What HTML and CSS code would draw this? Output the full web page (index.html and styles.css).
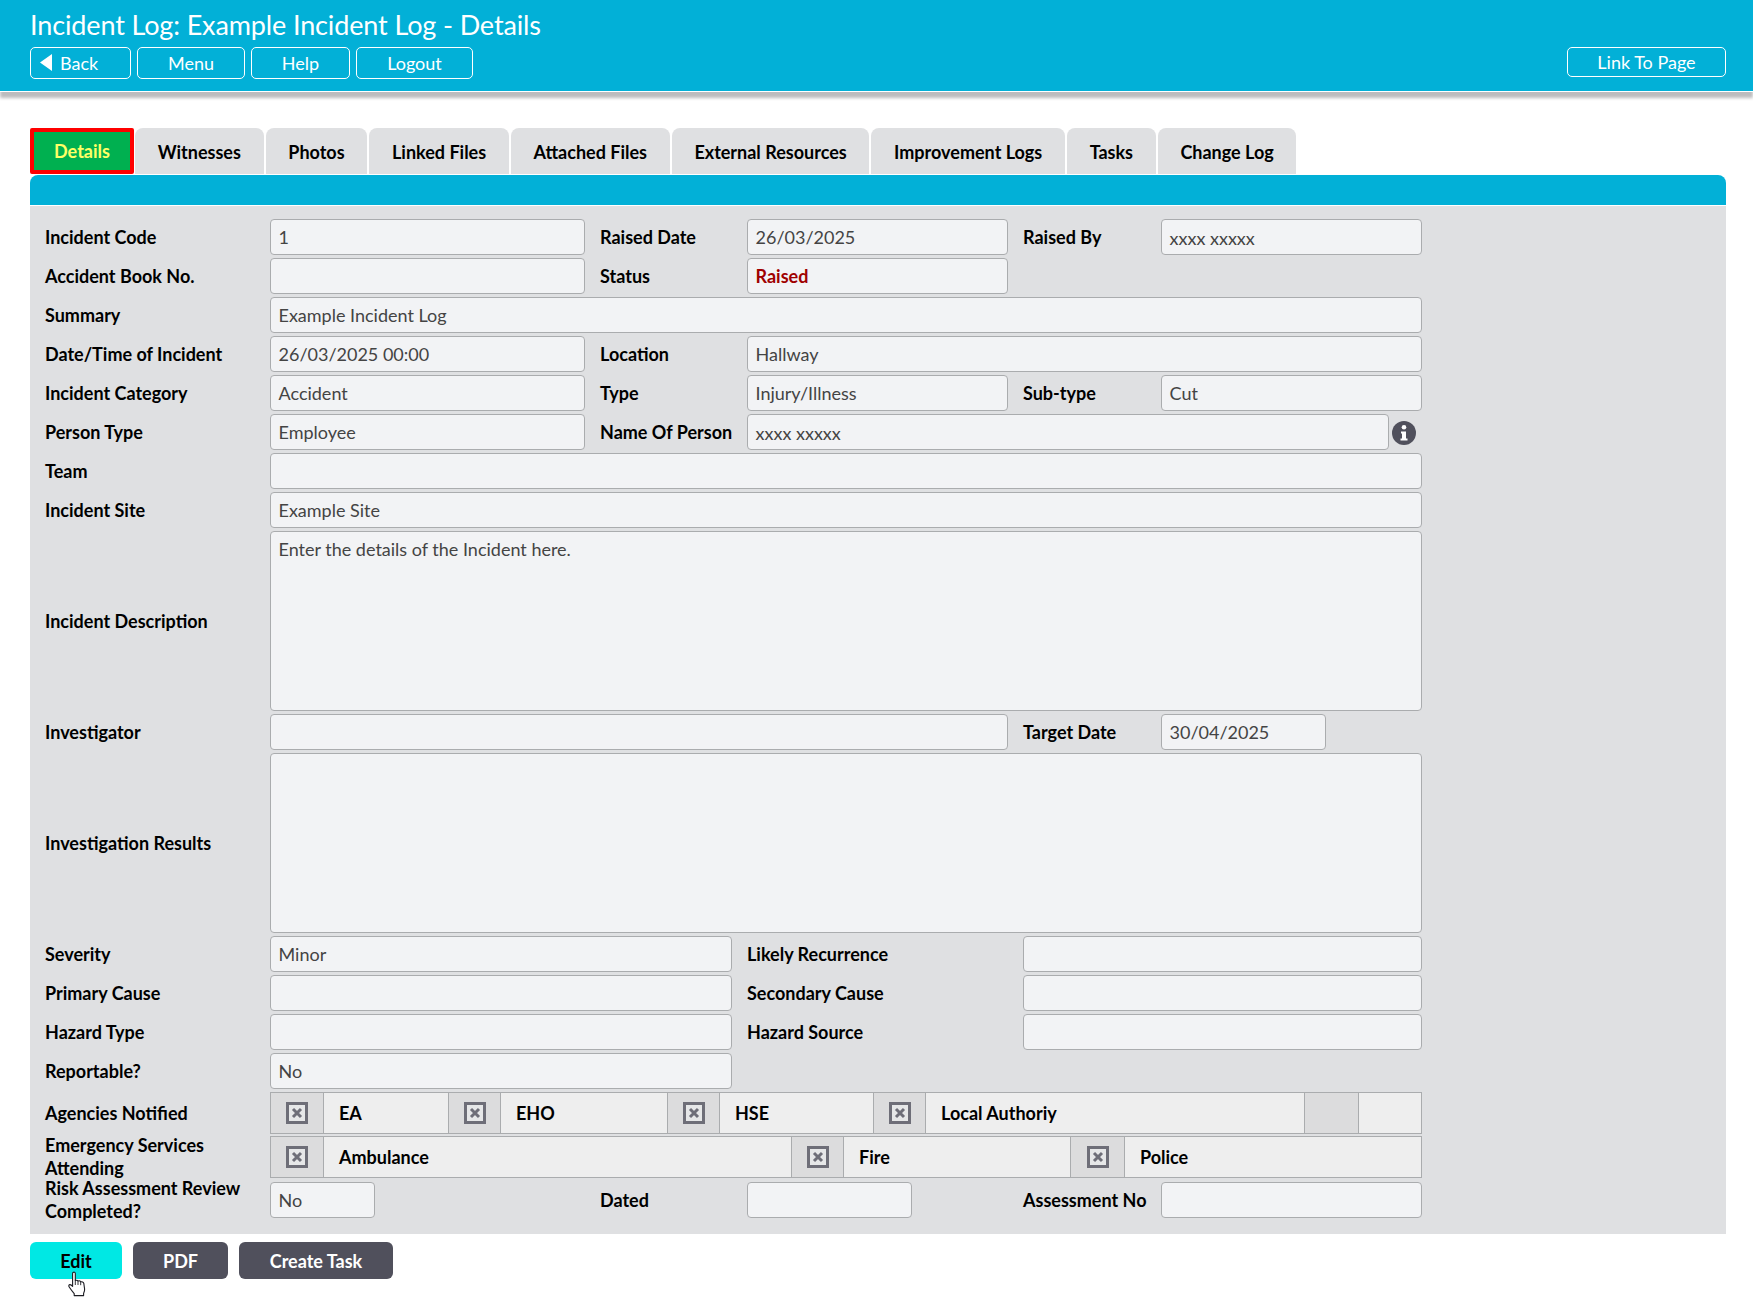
FILE: index.html
```html
<!DOCTYPE html>
<html lang="en">
<head>
  <meta charset="UTF-8">
  <title>Incident Log: Example Incident Log - Details</title>
  <link rel="stylesheet" href="styles.css">
</head>
<body>
  <!-- Page header -->
  <header class="page-header">
    <h1>Incident Log: Example Incident Log - Details</h1>
    <div class="header-nav">
      <a class="nav-btn btn-back">
        <svg class="back-arrow" width="12" height="17" viewBox="0 0 12 17"><path d="M12 0V17L0 8.5Z" fill="#fff"/></svg>
        Back
      </a>
      <a class="nav-btn btn-menu">Menu</a>
      <a class="nav-btn btn-help">Help</a>
      <a class="nav-btn btn-logout">Logout</a>
      <a class="nav-btn btn-link">Link To Page</a>
    </div>
  </header>

  <main class="content">
    <!-- Tabs -->
    <nav class="tabs">
      <a class="tab tab-active">Details</a>
      <a class="tab">Witnesses</a>
      <a class="tab">Photos</a>
      <a class="tab">Linked Files</a>
      <a class="tab">Attached Files</a>
      <a class="tab">External Resources</a>
      <a class="tab">Improvement Logs</a>
      <a class="tab">Tasks</a>
      <a class="tab">Change Log</a>
    </nav>
    <div class="blue-bar"></div>

    <!-- Form -->
    <section class="panel">
      <div class="row">
        <label class="lab-a">Incident Code</label>
        <div class="field f-315">1</div>
        <label class="lab-b">Raised Date</label>
        <div class="field f-261">26/03/2025</div>
        <label class="lab-c">Raised By</label>
        <div class="field f-261 masked">xxxx xxxxx</div>
      </div>
      <div class="row">
        <label class="lab-a">Accident Book No.</label>
        <div class="field f-315"></div>
        <label class="lab-b">Status</label>
        <div class="field f-261 status">Raised</div>
      </div>
      <div class="row">
        <label class="lab-a">Summary</label>
        <div class="field f-full">Example Incident Log</div>
      </div>
      <div class="row">
        <label class="lab-a">Date/Time of Incident</label>
        <div class="field f-315">26/03/2025 00:00</div>
        <label class="lab-b">Location</label>
        <div class="field f-675">Hallway</div>
      </div>
      <div class="row">
        <label class="lab-a">Incident Category</label>
        <div class="field f-315">Accident</div>
        <label class="lab-b">Type</label>
        <div class="field f-261">Injury/Illness</div>
        <label class="lab-c">Sub-type</label>
        <div class="field f-261">Cut</div>
      </div>
      <div class="row">
        <label class="lab-a">Person Type</label>
        <div class="field f-315">Employee</div>
        <label class="lab-b">Name Of Person</label>
        <div class="field f-642 masked">xxxx xxxxx</div>
        <svg class="info-icon" width="24" height="24" viewBox="0 0 24 24">
          <circle cx="12" cy="12" r="12" fill="#50505c"/>
          <circle cx="12" cy="6.2" r="2.3" fill="#fff"/>
          <path d="M9 10.5H14V17.5H15.5V19.5H8.5V17.5H10V12.5H9Z" fill="#fff"/>
        </svg>
      </div>
      <div class="row">
        <label class="lab-a">Team</label>
        <div class="field f-full"></div>
      </div>
      <div class="row">
        <label class="lab-a">Incident Site</label>
        <div class="field f-full">Example Site</div>
      </div>
      <div class="row">
        <label class="lab-a">Incident Description</label>
        <div class="field f-full area">Enter the details of the Incident here.</div>
      </div>
      <div class="row">
        <label class="lab-a">Investigator</label>
        <div class="field f-738"></div>
        <label class="lab-c">Target Date</label>
        <div class="field f-165">30/04/2025</div>
      </div>
      <div class="row">
        <label class="lab-a">Investigation Results</label>
        <div class="field f-full area"></div>
      </div>
      <div class="row">
        <label class="lab-a">Severity</label>
        <div class="field f-462">Minor</div>
        <label class="lab-d">Likely Recurrence</label>
        <div class="field f-399"></div>
      </div>
      <div class="row">
        <label class="lab-a">Primary Cause</label>
        <div class="field f-462"></div>
        <label class="lab-d">Secondary Cause</label>
        <div class="field f-399"></div>
      </div>
      <div class="row">
        <label class="lab-a">Hazard Type</label>
        <div class="field f-462"></div>
        <label class="lab-d">Hazard Source</label>
        <div class="field f-399"></div>
      </div>
      <div class="row">
        <label class="lab-a">Reportable?</label>
        <div class="field f-462">No</div>
      </div>
      <div class="row">
        <label class="lab-a">Agencies Notified</label>
        <div class="check-group">
          <span class="check-box check-first"><svg width="22" height="22" viewBox="0 0 22 22"><use href="#cross-box"/></svg></span>
          <span class="check-text w-126">EA</span>
          <span class="check-box"><svg width="22" height="22" viewBox="0 0 22 22"><use href="#cross-box"/></svg></span>
          <span class="check-text w-168">EHO</span>
          <span class="check-box"><svg width="22" height="22" viewBox="0 0 22 22"><use href="#cross-box"/></svg></span>
          <span class="check-text w-155">HSE</span>
          <span class="check-box"><svg width="22" height="22" viewBox="0 0 22 22"><use href="#cross-box"/></svg></span>
          <span class="check-text w-380">Local Authoriy</span>
          <span class="check-box check-wide"></span>
          <span class="check-text grow"></span>
        </div>
      </div>
      <div class="row row-second">
        <label class="lab-a lab-two">Emergency Services Attending</label>
        <div class="check-group">
          <span class="check-box check-first"><svg width="22" height="22" viewBox="0 0 22 22"><use href="#cross-box"/></svg></span>
          <span class="check-text w-469">Ambulance</span>
          <span class="check-box"><svg width="22" height="22" viewBox="0 0 22 22"><use href="#cross-box"/></svg></span>
          <span class="check-text w-228">Fire</span>
          <span class="check-box check-wide"><svg width="22" height="22" viewBox="0 0 22 22"><use href="#cross-box"/></svg></span>
          <span class="check-text grow">Police</span>
        </div>
      </div>
      <div class="row row-last">
        <label class="lab-a lab-two">Risk Assessment Review Completed?</label>
        <div class="field f-105">No</div>
        <label class="lab-e">Dated</label>
        <div class="field f-165"></div>
        <label class="lab-f">Assessment No</label>
        <div class="field f-261"></div>
      </div>
    </section>

    <!-- Actions -->
    <div class="actions">
      <a class="action-btn btn-edit">
        Edit
        <svg class="hand-cursor" width="20" height="26" viewBox="0 0 20 26">
          <path d="M6 1.5C7 .8 8.3 1.2 8.3 2.6V9.5C9.5 9 10.5 9.2 11 10C12.2 9.6 13.2 9.9 13.7 10.8C15 10.5 16.5 11 16.8 12.4L17.6 18C17.8 20 17.2 21 16.6 22.2V24.6H7.2V22.6C5.8 21 4.2 19 2.2 16C1.4 14.8 1.8 13.6 3 13.6C4 13.6 5 14.6 5.6 15.4V2.8C5.6 2.3 5.7 1.8 6 1.5Z" fill="#fff" stroke="#1c1c22" stroke-width="1.1" stroke-linejoin="round"/>
          <path d="M8.3 9.5V14M11 10V14M13.7 10.8V14.2" stroke="#1c1c22" stroke-width=".9" fill="none"/>
        </svg>
      </a>
      <a class="action-btn btn-pdf">PDF</a>
      <a class="action-btn btn-task">Create Task</a>
    </div>
  </main>

  <!-- Shared checkbox glyph -->
  <svg class="sprite" width="0" height="0">
    <symbol id="cross-box" viewBox="0 0 22 22">
      <rect x="1.5" y="1.5" width="19" height="19" fill="#e6e7e8" stroke="#6e6e78" stroke-width="3"/>
      <path d="M7 7L15 15M15 7L7 15" stroke="#6e6e78" stroke-width="3"/>
    </symbol>
  </svg>
</body>
</html>
```

FILE: styles.css
```css
* {
  margin: 0;
  padding: 0;
  box-sizing: border-box;
}

body {
  background-color: #fff;
  font-family: "Lato", "Liberation Sans", sans-serif;
  font-size: 18px;
  color: #000;
  overflow: hidden;
  height: 1314px;
}

.sprite {
  display: block;
}

/* header */
.page-header {
  height: 92px;
  background-color: #02b0d7;
  border-bottom: 1px solid #fff;
  box-shadow: 0 6px 3px 0 #bcbcbe;
  padding: 7px 27px 0 30px;
}

.page-header h1 {
  font-size: 27px;
  font-weight: 400;
  line-height: 35px;
  letter-spacing: -0.13px;
  color: #fff;
}

.header-nav {
  display: flex;
  gap: 6px;
  margin-top: 5px;
}

.nav-btn {
  display: flex;
  align-items: center;
  justify-content: center;
  height: 32px;
  padding-bottom: 1px;
  border: 1px solid #fff;
  border-radius: 5px;
  color: #fff;
  font-size: 18px;
}

.btn-back { width: 101px; gap: 8px; justify-content: flex-start; padding-left: 9px; }
.btn-menu { width: 108px; }
.btn-help { width: 99px; }
.btn-logout { width: 117px; }
.btn-link { width: 159px; margin-left: auto; height: 30px; }

/* tabs */
.content {
  padding: 36px 27px 0 30px;
}

.tabs {
  display: flex;
  gap: 2px;
  height: 46px;
}

.tab {
  display: flex;
  align-items: center;
  padding: 1px 22.7px 0;
  background-color: #dfe0e2;
  border-radius: 8px 8px 0 0;
  font-weight: 700;
  font-size: 18px;
  color: #000;
}

.tab-active {
  width: 104px;
  margin-right: -1px;
  justify-content: center;
  padding: 0;
  background-color: #00b050;
  border: 4px solid #f00;
  border-radius: 2px;
  color: #ffff66;
}

.blue-bar {
  height: 31px;
  margin-top: 1px;
  background-color: #02b0d7;
  border-radius: 8px 8px 0 0;
  border-bottom: 1px solid #fff;
}

/* form */
.panel {
  display: flex;
  flex-direction: column;
  gap: 3px;
  height: 1028px;
  padding: 13px 15px 0;
  background-color: #dfe0e2;
}

.row {
  display: flex;
  align-items: center;
}

.row-second { margin-top: -1px; }
.row-last { margin-top: 1px; }

label {
  font-weight: 700;
  line-height: 23px;
  flex-shrink: 0;
}

.lab-a { width: 225px; padding-right: 20px; }
.lab-b { width: 147px; margin-left: 15px; }
.lab-c { width: 138px; margin-left: 15px; }
.lab-d { width: 276px; margin-left: 15px; }
.lab-e { width: 147px; margin-left: 225px; }
.lab-f { width: 138px; margin-left: 111px; }

/* two line labels hang over the row edges */
.lab-two { margin: -5px 0; }

.field {
  height: 36px;
  padding: 0 7.5px;
  line-height: 34px;
  background-color: #f2f3f5;
  border: 1px solid #aaacae;
  border-radius: 4px;
  color: #444;
  font-size: 18px;
  flex-shrink: 0;
}

.f-105 { width: 105px; }
.f-165 { width: 165px; }
.f-261 { width: 261px; }
.f-315 { width: 315px; }
.f-399 { width: 399px; }
.f-462 { width: 462px; }
.f-642 { width: 642px; }
.f-675 { width: 675px; }
.f-738 { width: 738px; }
.f-full { width: 1152px; }

.area {
  height: 180px;
}

.status {
  color: #a00000;
  font-weight: 700;
}

.masked {
  padding-top: 1px;
}

.info-icon {
  margin-left: 3px;
  margin-top: 1px;
}

/* checkbox strips */
.check-group {
  display: flex;
  width: 1152px;
  height: 42px;
  border: 1px solid #aaacae;
  background-color: #eeeeee;
}

.check-box {
  display: flex;
  align-items: center;
  justify-content: center;
  width: 51px;
  background-color: #dcdcdd;
  flex-shrink: 0;
}

.check-first { width: 52px; }
.check-wide { width: 53px; }

.check-text {
  display: flex;
  align-items: center;
  padding-left: 15px;
  border-left: 1px solid #aaacae;
  border-right: 1px solid #aaacae;
  font-weight: 700;
}

.check-text.grow {
  flex: 1;
  border-right: none;
}

.w-126 { width: 126px; }
.w-168 { width: 168px; }
.w-155 { width: 155px; }
.w-380 { width: 380px; }
.w-469 { width: 469px; }
.w-228 { width: 228px; }

/* bottom buttons */
.actions {
  display: flex;
  gap: 11px;
  margin-top: 8px;
}

.action-btn {
  position: relative;
  display: flex;
  align-items: center;
  justify-content: center;
  height: 37px;
  border-radius: 6px;
  background-color: #50505c;
  color: #fff;
  font-weight: 700;
  font-size: 18px;
}

.btn-edit {
  width: 92px;
  background-color: #00e8e4;
  color: #000;
  font-weight: 700;
}

.btn-pdf { width: 95px; }
.btn-task { width: 154px; }

.hand-cursor {
  position: absolute;
  left: 37px;
  top: 29px;
}
```
